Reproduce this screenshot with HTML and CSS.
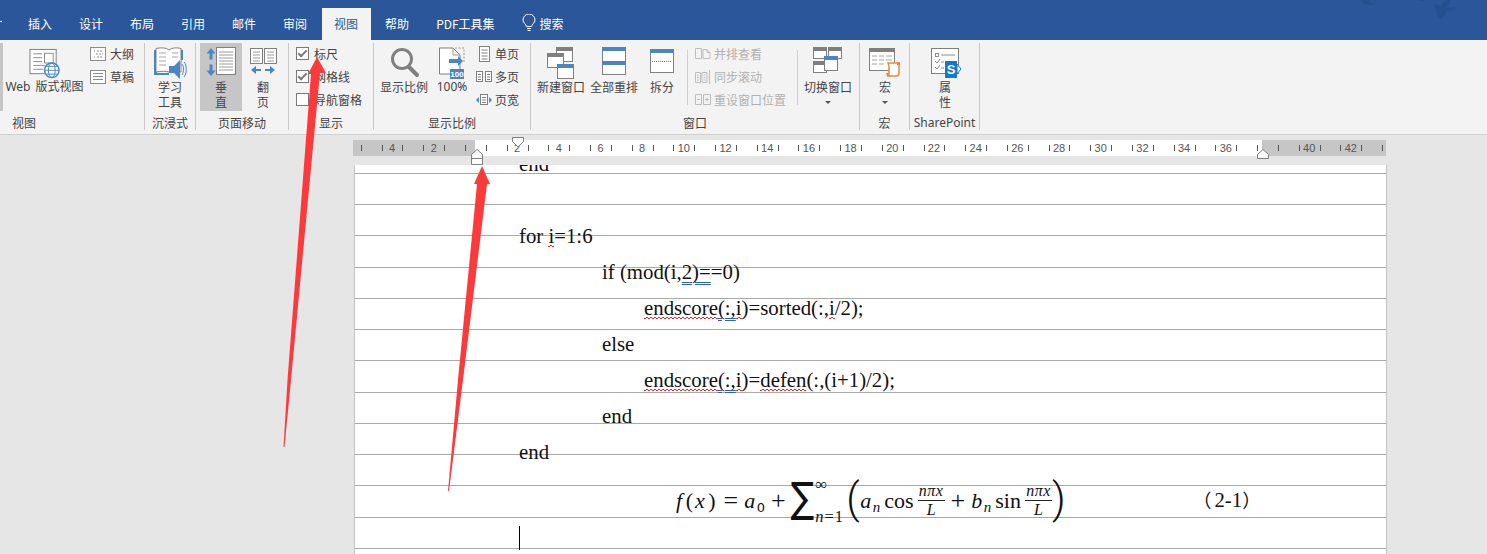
FILE: index.html
```html
<!DOCTYPE html>
<html lang="zh-CN">
<head>
    <meta charset="UTF-8">
    <title>视图 - Word</title>
    <link rel="stylesheet" href="styles.css">
</head>
<body>

<div class="title-bar">
    <div class="tabs">
        <span class="tab-stub"></span>
        <div class="tab">插入</div>
        <div class="tab">设计</div>
        <div class="tab">布局</div>
        <div class="tab">引用</div>
        <div class="tab">邮件</div>
        <div class="tab">审阅</div>
        <div class="tab active">视图</div>
        <div class="tab">帮助</div>
        <div class="tab">PDF工具集</div>
        <div class="tab search">
            <svg width="14" height="18" viewBox="0 0 14 18" fill="none" stroke="#fff"><path d="M4.5 12.5C4 10 1 9 1 6a6 6 0 0 1 12 0c0 3-3 4-3.500 6.500z"/><path d="M5 14.500h4M5.500 16.500h3"/></svg>
            搜索
        </div>
    </div>
    <svg class="birds" width="100" height="20" viewBox="0 0 100 20" fill="#24508f"><path d="M2 0h10l1 3 4 1-5 1-6-1zM60 0h7l-3 1zM76 4l6 2 6-6h5l-5 8 10-1-1 3-8 1-5 8-4-1-2-8z"/></svg>
</div>

<div class="ribbon">
    <div class="group group-view">
        <div class="group-body">
            <span class="scrap"></span>
            <div class="btn btn-web">
                <svg class="icon" width="34" height="33" viewBox="0 0 34 33" fill="none"><rect x="1.500" y="2.500" width="27" height="25" fill="#fff" stroke="#7f7f7f"/><path d="M5 7h9M5 11h9M5 15h9M5 19h12M5 23h10" stroke="#8c8c8c"/><rect x="16.500" y="6.500" width="9" height="10" stroke="#8c8c8c"/><circle cx="24" cy="24" r="7.500" fill="#fff" stroke="#4a86c5" stroke-width="1.500"/><ellipse cx="24" cy="24" rx="3.500" ry="7.500" stroke="#4a86c5"/><path d="M16.500 24h15M18 20h12M18 28h12" stroke="#4a86c5"/></svg>
                <span>Web 版式视图</span>
            </div>
            <div class="small-col">
                <div class="row"><svg width="16" height="14" viewBox="0 0 16 14" fill="none" stroke="#8c8c8c"><rect x=".5" y=".5" width="15" height="13" fill="#fff"/><path d="M4 4h1M7 4h6M6 7h7M4 10h1M7 10h6" stroke-dasharray="2 1"/></svg><span>大纲</span></div>
                <div class="row"><svg width="16" height="14" viewBox="0 0 16 14" fill="none" stroke="#8c8c8c"><rect x=".5" y=".5" width="15" height="13" fill="#fff"/><path d="M3 3.500h10M3 6.500h10M3 9.500h10"/></svg><span>草稿</span></div>
            </div>
        </div>
        <div class="group-label">视图</div>
    </div>

    <div class="group group-immersive">
        <div class="group-body">
            <div class="btn btn-full">
                <svg class="icon" width="34" height="32" viewBox="0 0 34 32"><path d="M1 3h3v23h12v2H1z" fill="#4a86c5"/><path d="M27 3h3v10h-3z" fill="#4a86c5"/><path d="M3 1.500c5-1 10-1 13 1.500 3-2.500 8-2.500 12-1.500V25H16C13 24 8 24 3 25z" fill="#fff" stroke="#7f7f7f"/><path d="M6 6h7M6 10h7M6 14h7M6 18h7M19 6h6M19 10h6" stroke="#a6a6a6"/><path d="M16 19h5l6-6v19l-6-6h-5z" fill="#4a86c5"/><path d="M29 17c2 2 2 8 0 11M31 15c3 3 3 12 0 15" fill="none" stroke="#4a86c5"/></svg>
                <span>学习</span><span>工具</span>
            </div>
        </div>
        <div class="group-label">沉浸式</div>
    </div>

    <div class="group group-move">
        <div class="group-body">
            <div class="btn btn-page selected">
                <svg class="icon" width="32" height="32" viewBox="0 0 32 32"><path d="M6 1l4.500 5.500H7.500v6h-3v-6H1.500zM6 29l4.500-5.500H7.500v-6h-3v6H1.500z" fill="#4a86c5"/><rect x="11.500" y=".5" width="19" height="27" fill="#fff" stroke="#7f7f7f"/><path d="M14 5h14M14 8h14M14 11h14M14 14h14M14 17h14M14 20h14M14 23h14" stroke="#9a9a9a"/></svg>
                <span>垂</span><span>直</span>
            </div>
            <div class="btn btn-page">
                <svg class="icon" width="30" height="32" viewBox="0 0 30 32" fill="none"><rect x="2.500" y="1.500" width="12" height="15" fill="#fff" stroke="#7f7f7f"/><rect x="16.500" y="1.500" width="12" height="15" fill="#fff" stroke="#7f7f7f"/><path d="M5 5h7M5 8h7M5 11h7M5 14h7M19 5h7M19 8h7M19 11h7M19 14h7" stroke="#9a9a9a"/><path d="M8 19l-5 4 5 4v-3h5v-2H8zM22 19l5 4-5 4v-3h-5v-2h5z" fill="#4a86c5"/></svg>
                <span>翻</span><span>页</span>
            </div>
        </div>
        <div class="group-label">页面移动</div>
    </div>

    <div class="group group-show">
        <div class="group-body">
            <div class="small-col">
                <div class="row check-row"><span class="check on"></span><span>标尺</span></div>
                <div class="row check-row"><span class="check on"></span><span>网格线</span></div>
                <div class="row check-row"><span class="check"></span><span>导航窗格</span></div>
            </div>
        </div>
        <div class="group-label">显示</div>
    </div>

    <div class="group group-zoom">
        <div class="group-body">
            <div class="btn btn-lens">
                <svg class="icon" width="30" height="32" viewBox="0 0 30 32" fill="none"><circle cx="13" cy="12" r="9.500" stroke="#808080" stroke-width="3"/><path d="M20 20l8 8" stroke="#808080" stroke-width="4" stroke-linecap="round"/></svg>
                <span>显示比例</span>
            </div>
            <div class="btn btn-hundred">
                <svg class="icon" width="28" height="32" viewBox="0 0 28 32" fill="none"><path d="M1.500 1H15l7 7v19H1.500z" fill="#fff" stroke="#7f7f7f"/><path d="M15 1v7h7" stroke="#9a9a9a"/><path d="M17 1h9v14" stroke="#9a9a9a" stroke-dasharray="2 1.500"/><path d="M11 12h9v-3l5 5-5 5v-3h-9z" fill="#4a86c5"/><rect x="12" y="22" width="14" height="10" fill="#4a86c5"/><text x="19" y="30" class="mini">100</text></svg>
                <span>100%</span>
            </div>
            <div class="small-col col-page">
                <div class="row"><svg width="16" height="16" viewBox="0 0 16 16" fill="none" stroke="#7f7f7f"><rect x="3.500" y=".5" width="10" height="15" fill="#fff"/><path d="M5.500 4h6M5.500 7h6M5.500 10h6M5.500 13h6"/></svg><span>单页</span></div>
                <div class="row"><svg width="16" height="12" viewBox="0 0 16 12" fill="none" stroke="#7f7f7f"><rect x=".5" y=".5" width="6" height="10" fill="#fff"/><rect x="9.500" y=".5" width="6" height="10" fill="#fff"/><path d="M2 3.500h3M2 6h3M2 8.500h3M11 3.500h3M11 6h3M11 8.500h3"/></svg><span>多页</span></div>
                <div class="row"><svg width="16" height="12" viewBox="0 0 16 12" fill="none" stroke="#7f7f7f"><rect x="4.500" y=".5" width="7" height="10" fill="#fff"/><path d="M6 3.500h4M6 6h4M6 8.500h4"/><path d="M0 6l3-3v6zM16 6l-3-3v6z" fill="#4a86c5" stroke="none"/></svg><span>页宽</span></div>
            </div>
        </div>
        <div class="group-label">显示比例</div>
    </div>

    <div class="group group-window">
        <div class="group-body">
            <div class="btn btn-new">
                <svg class="icon" width="28" height="32" viewBox="0 0 28 32" fill="none"><rect x="9.500" y=".5" width="16" height="14" fill="#fff" stroke="#7f7f7f"/><rect x="9" y="0" width="17" height="4" fill="#7f7f7f"/><rect x=".5" y="6.500" width="16" height="14" fill="#fff" stroke="#7f7f7f"/><rect x="0" y="6" width="17" height="4" fill="#7f7f7f"/><rect x="10.500" y="17.500" width="16" height="14" fill="#fff" stroke="#7f7f7f"/><rect x="10" y="17" width="17" height="4" fill="#4a86c5"/></svg>
                <span>新建窗口</span>
            </div>
            <div class="btn btn-arrange">
                <svg class="icon" width="24" height="32" viewBox="0 0 24 32" fill="none"><rect x=".5" y=".5" width="23" height="27" fill="#fff" stroke="#7f7f7f"/><rect width="24" height="4" fill="#4a86c5"/><rect y="14" width="24" height="4" fill="#4a86c5"/></svg>
                <span>全部重排</span>
            </div>
            <div class="btn btn-split">
                <svg class="icon" width="24" height="32" viewBox="0 0 24 32" fill="none"><rect x=".5" y="2.500" width="23" height="23" fill="#fff" stroke="#7f7f7f"/><rect y="2" width="24" height="4" fill="#4a86c5"/><path d="M2 14.500h20" stroke="#4a86c5" stroke-dasharray="1 1"/></svg>
                <span>拆分</span>
            </div>
            <span class="divider"></span>
            <div class="small-col col-disabled">
                <div class="row"><svg width="16" height="12" viewBox="0 0 16 12" fill="none" stroke="#bdbdbd"><path d="M.5.5h6v10h-6zM8 1.500h4l3 3v6H8zM12 1.500v3h3"/></svg><span>并排查看</span></div>
                <div class="row"><svg width="16" height="16" viewBox="0 0 16 16" fill="none" stroke="#bdbdbd"><path d="M.5 3.500h5v10h-5zM7 3.500h5v10H7zM2 6h2M2 8.500h2M2 11h2M8.500 6h2M8.500 8.500h2M8.500 11h2M14.500 1v14"/></svg><span>同步滚动</span></div>
                <div class="row"><svg width="16" height="12" viewBox="0 0 16 12" fill="none" stroke="#bdbdbd"><path d="M.5.5h6v10h-6zM8.500.5h7v10h-7zM2 5.500h3M10 5.500h4M12 3.500v4"/></svg><span>重设窗口位置</span></div>
            </div>
            <span class="divider divider-end"></span>
            <div class="btn btn-switch">
                <svg class="icon" width="30" height="32" viewBox="0 0 30 32" fill="none"><rect x=".5" y=".5" width="13" height="11" fill="#fff" stroke="#7f7f7f"/><rect width="14" height="4" fill="#7f7f7f"/><rect x="15.500" y=".5" width="13" height="11" fill="#fff" stroke="#7f7f7f"/><rect x="15" width="14" height="4" fill="#7f7f7f"/><rect x=".5" y="14.500" width="13" height="11" fill="#fff" stroke="#7f7f7f"/><rect y="14" width="14" height="4" fill="#7f7f7f"/><rect x="11.500" y="9.500" width="13" height="14" fill="#fff" stroke="#7f7f7f"/><rect x="11" y="9" width="14" height="4" fill="#4a86c5"/></svg>
                <span>切换窗口</span>
                <i class="caret-down"></i>
            </div>
        </div>
        <div class="group-label">窗口</div>
    </div>

    <div class="group group-macro">
        <div class="group-body">
            <div class="btn btn-full">
                <svg class="icon" width="32" height="32" viewBox="0 0 32 32" fill="none"><rect x=".5" y="1.500" width="25" height="22" fill="#fff" stroke="#7f7f7f"/><rect y="1" width="26" height="4" fill="#7f7f7f"/><path d="M3 9h5M10 9h5M17 9h6M3 13h5M10 13h5M17 13h6M3 17h5M10 17h5" stroke="#a6a6a6"/><path d="M19 16h11v10c0 2-1 3-3 3H18c2 0 2-1 2-3v-7c0-1-1-2-1-3z" fill="#fff" stroke="#e98b3a" stroke-width="1.500"/><path d="M28 15h3v3h-3zM17 26h3v3h-2z" fill="#e98b3a"/></svg>
                <span>宏</span>
                <i class="caret-down"></i>
            </div>
        </div>
        <div class="group-label">宏</div>
    </div>

    <div class="group group-share">
        <div class="group-body">
            <div class="btn btn-full">
                <svg class="icon" width="32" height="32" viewBox="0 0 32 32" fill="none"><rect x="2.500" y="1.500" width="27" height="25" fill="#fff" stroke="#7f7f7f"/><rect x="6.500" y="6.500" width="3" height="3" stroke="#8c8c8c"/><path d="M12 8h14M12 15h3M12 21h3M6 14l2 2 3-4M6 20l2 2 3-4" stroke="#8c8c8c"/><path d="M28 17l4 5-4 5z" fill="#fff" stroke="#0f78d4"/><rect x="16" y="14" width="12" height="17" fill="#0f78d4"/><text x="22" y="27" class="share-s">S</text></svg>
                <span>属</span><span>性</span>
            </div>
        </div>
        <div class="group-label">SharePoint</div>
    </div>
</div>

<div class="workspace">
    <div class="ruler">
        <div class="ruler-track">
            <span class="cell"></span>
            <span class="cell">4</span>
            <span class="cell">2</span>
            <span class="cell"></span>
            <span class="cell">2</span>
            <span class="cell">4</span>
            <span class="cell">6</span>
            <span class="cell">8</span>
            <span class="cell">10</span>
            <span class="cell">12</span>
            <span class="cell">14</span>
            <span class="cell">16</span>
            <span class="cell">18</span>
            <span class="cell">20</span>
            <span class="cell">22</span>
            <span class="cell">24</span>
            <span class="cell">26</span>
            <span class="cell">28</span>
            <span class="cell">30</span>
            <span class="cell">32</span>
            <span class="cell">34</span>
            <span class="cell">36</span>
            <span class="cell"></span>
            <span class="cell">40</span>
            <span class="cell">42</span>
            <span class="cell"></span>
        </div>
        <svg class="marker marker-first" width="12" height="11" viewBox="0 0 12 11"><path d="M.5.5h11v4l-5.500 5.500L.5 4.500z" fill="#fff" stroke="#7f7f7f"/></svg>
        <svg class="marker marker-left" width="12" height="16" viewBox="0 0 12 16"><path d="M.5 15.500v-10l5.500-5 5.500 5v10z" fill="#fff" stroke="#7f7f7f"/><path d="M.5 9.500h11" stroke="#7f7f7f"/></svg>
        <svg class="marker marker-right" width="12" height="10" viewBox="0 0 12 10"><path d="M.5 9.500v-4l5.500-5 5.500 5v4z" fill="#fff" stroke="#7f7f7f"/></svg>
    </div>

    <div class="page">
        <div class="doc">
            <p>end</p>
            <p>&nbsp;</p>
            <p>for <span class="spell">i</span>=1:6</p>
            <p class="indent-1">if (mod(i,<span class="grammar">2)=</span>=0)</p>
            <p class="indent-2"><span class="spell">endscore</span><span class="grammar">(:,</span><span class="spell">i</span>)=sorted(:,<span class="spell">i</span>/2);</p>
            <p class="indent-1">else</p>
            <p class="indent-2"><span class="spell">endscore</span><span class="grammar">(:,</span><span class="spell">i</span>)=<span class="spell">defen</span>(:,(i+1)/2);</p>
            <p class="indent-1">end</p>
            <p>end</p>
            <div class="formula">
                <span class="math">f</span><span class="upright-paren">(</span><span class="math">x</span><span class="upright-paren">)</span>
                <span class="op">=</span>
                <span class="math">a<sub>0</sub></span>
                <span class="op">+</span>
                <span class="sum">∑</span>
                <span class="limits"><span>∞</span><span class="math-small"><i>n</i>=1</span></span>
                <span class="big-paren">(</span>
                <span class="math">a<sub class="math-sub">n</sub></span>
                <span class="func">cos</span>
                <span class="frac"><span class="num">nπx</span><span class="den">L</span></span>
                <span class="op">+</span>
                <span class="math">b<sub class="math-sub">n</sub></span>
                <span class="func">sin</span>
                <span class="frac"><span class="num">nπx</span><span class="den">L</span></span>
                <span class="big-paren paren-end">)</span>
                <span class="eq-number">（<span class="eq-digits">2-1</span>）</span>
            </div>
            <p><span class="text-cursor"></span></p>
        </div>
    </div>
</div>

<svg class="arrows" width="1487" height="554" viewBox="0 0 1487 554" fill="#fb3a3c">
    <path d="M317 57L326 73H320L291 380L284.500 447H283.500L287.500 380L311 74H308Z"/>
    <path d="M482 166L490 184H487L463 380L449 491H448L458 380L477 184H474Z"/>
</svg>

</body>
</html>
```

FILE: styles.css
```css
/* Word window */
html, body {
    margin: 0;
    height: 100%;
    overflow: hidden;
}

body {
    position: relative;
    background-color: #e6e6e6;
    font-family: "Noto Sans", "Noto Sans CJK SC", sans-serif;
    font-size: 12px;
    color: #444;
}

/* title bar and tabs */
.title-bar {
    position: relative;
    height: 40px;
    background-color: #2b579a;
}

.tabs {
    display: flex;
    align-items: flex-end;
    gap: 3px;
    height: 40px;
}

.tab-stub {
    align-self: flex-start;
    width: 2px;
    height: 1px;
    margin: 21px 11px 0 0;
    background-color: #fff;
}

.tab {
    display: flex;
    align-items: center;
    gap: 4px;
    height: 30px;
    padding: 0 12px 2px;
    color: #fff;
    font-family: "Noto Sans CJK SC", sans-serif;
}

.tab.active {
    margin-right: -1px;
    padding-right: 13px;
    background-color: #f3f3f3;
    color: #2b579a;
}

.birds {
    position: absolute;
    top: 0;
    left: 1358px;
}

/* ribbon */
.ribbon {
    display: flex;
    height: 91px;
    padding-top: 3px;
    background-color: #f3f3f3;
    border-bottom: 1px solid #d0d0d0;
    font-family: "Noto Sans CJK SC", sans-serif;
    line-height: 15px;
}

.group {
    box-sizing: border-box;
    display: flex;
    flex-direction: column;
    height: 87px;
    border-right: 1px solid #c8c8c8;
}

.group-view { width: 145px; }
.group-immersive { width: 51px; }
.group-move { width: 93px; padding-left: 4px; }
.group-show { width: 85px; padding-left: 7px; }
.group-zoom { width: 157px; padding-left: 4px; }
.group-window { width: 329px; padding-left: 2px; }
.group-macro { width: 50px; padding-left: 1px; }
.group-share { width: 70px; padding-left: 1px; }

.group-body {
    display: flex;
    height: 69px;
}

.group-label {
    margin-top: 4px;
    text-align: center;
    white-space: nowrap;
}

.group-view .group-label {
    width: 48px;
}

.group-move .group-label,
.group-zoom .group-label {
    margin-left: -4px;
}

.group-show .group-label {
    margin-left: -7px;
}

.group-window .group-label {
    margin-left: -2px;
}

.group-macro .group-label,
.group-share .group-label {
    margin-left: -1px;
}

.group-share .group-label {
    font-family: "Noto Sans", sans-serif;
}

.scrap {
    width: 3px;
    background-color: #c6c6c6;
}

.btn {
    display: flex;
    flex-direction: column;
    align-items: center;
    white-space: nowrap;
}

.btn .icon {
    flex: none;
    height: 32px;
    margin-top: 4px;
    overflow: visible;
}

.btn-web { width: 79px; margin-left: 2px; }
.btn-web span {
    font-family: "Noto Sans", "Noto Sans CJK SC", sans-serif;
    word-spacing: 2px;
}
.btn-full { width: 100%; }
.btn-page { width: 42px; }
.btn-lens { width: 52px; }
.btn-hundred { width: 44px; }
.btn-new { width: 56px; }
.btn-arrange { width: 50px; }
.btn-split { width: 46px; }
.btn-switch { width: 60px; }
.btn-hundred span { font-family: "Noto Sans", sans-serif; }

.selected {
    background-color: #c6c6c6;
}

.small-col {
    display: flex;
    flex-direction: column;
    margin-top: -1px;
}

.group-view .small-col {
    margin-left: 6px;
}

.col-page {
    margin-left: 2px;
}

.row {
    display: flex;
    align-items: center;
    gap: 3px;
    height: 23px;
    white-space: nowrap;
}

.row svg {
    flex: none;
}

.group-view .row {
    gap: 4px;
}

.col-disabled {
    margin-left: 7px;
    color: #b1b1b1;
}

.check-row {
    gap: 5px;
}

.check {
    box-sizing: border-box;
    display: flex;
    align-items: center;
    justify-content: center;
    width: 13px;
    height: 13px;
    background-color: #fff;
    border: 1px solid #7a7a7a;
}

.check.on::after {
    content: "";
    width: 7px;
    height: 3px;
    margin-top: -2px;
    border-left: 2px solid #7a7a7a;
    border-bottom: 2px solid #7a7a7a;
    transform: rotate(-45deg);
}

.divider {
    flex: none;
    width: 1px;
    height: 55px;
    margin: 7px 0 0 2px;
    background-color: #cfcfcf;
}

.divider-end {
    margin-left: 11px;
}

.caret-down {
    width: 0;
    height: 0;
    margin-top: 7px;
    border: 3px solid transparent;
    border-top: 3px solid #555;
    border-bottom: 0;
}

.mini {
    fill: #fff;
    font-family: "Liberation Sans", sans-serif;
    font-size: 8px;
    font-weight: bold;
    text-anchor: middle;
}

.share-s {
    fill: #fff;
    font-family: "Liberation Sans", sans-serif;
    font-size: 13px;
    font-weight: bold;
    text-anchor: middle;
}

/* ruler */
.workspace {
    padding-top: 5px;
}

.ruler {
    position: relative;
    width: 1033px;
    height: 25px;
    margin-left: 353px;
}

.ruler-track {
    display: flex;
    height: 16px;
    overflow: hidden;
    background: linear-gradient(to right, #c6c6c6 122px, #fff 122px, #fff 909px, #c6c6c6 909px);
}

.cell {
    flex: none;
    width: 41.7px;
    font-family: "Liberation Sans", sans-serif;
    font-size: 11px;
    line-height: 16px;
    color: #555;
    text-align: center;
    background:
        linear-gradient(#555, #555) 10.4px 5px / 1px 6px no-repeat,
        linear-gradient(#555, #555) 31.3px 5px / 1px 6px no-repeat;
}

.cell:first-child {
    margin-left: -23.5px;
}

.marker {
    position: absolute;
}

.marker-first { top: -3px; left: 159px; }
.marker-left { top: 9px; left: 118px; }
.marker-right { top: 9px; left: 904px; }

/* document page */
.page {
    box-sizing: border-box;
    width: 1033px;
    height: 389px;
    margin-left: 354px;
    overflow: hidden;
    border-left: 1px solid #c4c4c4;
    border-right: 1px solid #c4c4c4;
    background-color: #fff;
    background-image: repeating-linear-gradient(to bottom, transparent 0, transparent 8px, #a9a9a9 8px, #a9a9a9 9px, transparent 9px, transparent 31.25px);
}

.doc {
    margin-top: -19px;
    padding-left: 164px;
    font-family: "Liberation Serif", "Noto Sans CJK SC", serif;
    font-size: 20.8px;
    line-height: 36px;
    color: #111;
}

.doc p {
    margin: 0;
    height: 36px;
    white-space: nowrap;
}

.doc .indent-1 { margin-left: 83px; }
.doc .indent-2 { margin-left: 125px; }

/* proofing marks */
.spell {
    padding-bottom: 1px;
    background-image:
        linear-gradient(135deg, transparent 35%, #e3262e 35%, #e3262e 65%, transparent 65%),
        linear-gradient(45deg, transparent 35%, #e3262e 35%, #e3262e 65%, transparent 65%);
    background-size: 4px 2px;
    background-position: 0 calc(100% - 1px), 2px calc(100% - 1px);
    background-repeat: repeat-x;
}

.grammar {
    text-decoration: underline double #2a62c8 1px;
    text-underline-offset: 3px;
}

.text-cursor {
    display: inline-block;
    width: 1px;
    height: 24px;
    vertical-align: -6px;
    background-color: #000;
}

/* equation */
.formula {
    box-sizing: border-box;
    display: flex;
    align-items: center;
    height: 49px;
    padding: 12px 0 0 157px;
    font-size: 22px;
    line-height: 1;
    white-space: nowrap;
}

.math {
    font-style: italic;
    letter-spacing: 1.5px;
}

.math sub {
    font-family: "DejaVu Sans", sans-serif;
    font-size: 13px;
    font-style: normal;
    letter-spacing: 0;
    vertical-align: -4px;
    line-height: 0;
}

.math sub.math-sub {
    font-family: "Liberation Serif", serif;
    font-size: 15px;
    font-style: italic;
}

.upright-paren {
    margin: 0 2px;
}

.op {
    margin: 0 6px;
    font-size: 26px;
}

.sum {
    margin: -6px 1px 0 -1px;
    font-family: "DejaVu Sans", sans-serif;
    font-size: 35px;
    line-height: 40px;
    transform: scaleY(1.2);
}

.limits {
    display: flex;
    flex-direction: column;
    align-items: flex-start;
    justify-content: space-between;
    width: 30px;
    height: 50px;
    font-size: 17px;
}

.math-small {
    font-size: 16.5px;
    letter-spacing: 1px;
}

.big-paren {
    width: 12px;
    margin: -4px 2px 0 1px;
    font-family: Roboto, sans-serif;
    font-size: 42px;
    font-weight: 300;
    line-height: 44px;
    text-align: center;
}

.paren-end {
    margin: -4px 0 0;
}

.func {
    margin: 0 4px;
}

.frac {
    display: flex;
    flex-direction: column;
    align-items: center;
    width: 27px;
    font-size: 16px;
    font-style: italic;
}

.num {
    width: 100%;
    padding-bottom: 1px;
    border-bottom: 1px solid #222;
    letter-spacing: .5px;
    text-align: center;
}

.den {
    padding-top: 1px;
}

.eq-number {
    margin-left: 129px;
    font-family: "Liberation Serif", "Noto Sans CJK SC", serif;
    font-size: 18.5px;
}

.eq-digits {
    margin-left: 3px;
    font-size: 20.8px;
}

/* red annotation arrows */
.arrows {
    position: absolute;
    top: 0;
    left: 0;
    pointer-events: none;
}
```
